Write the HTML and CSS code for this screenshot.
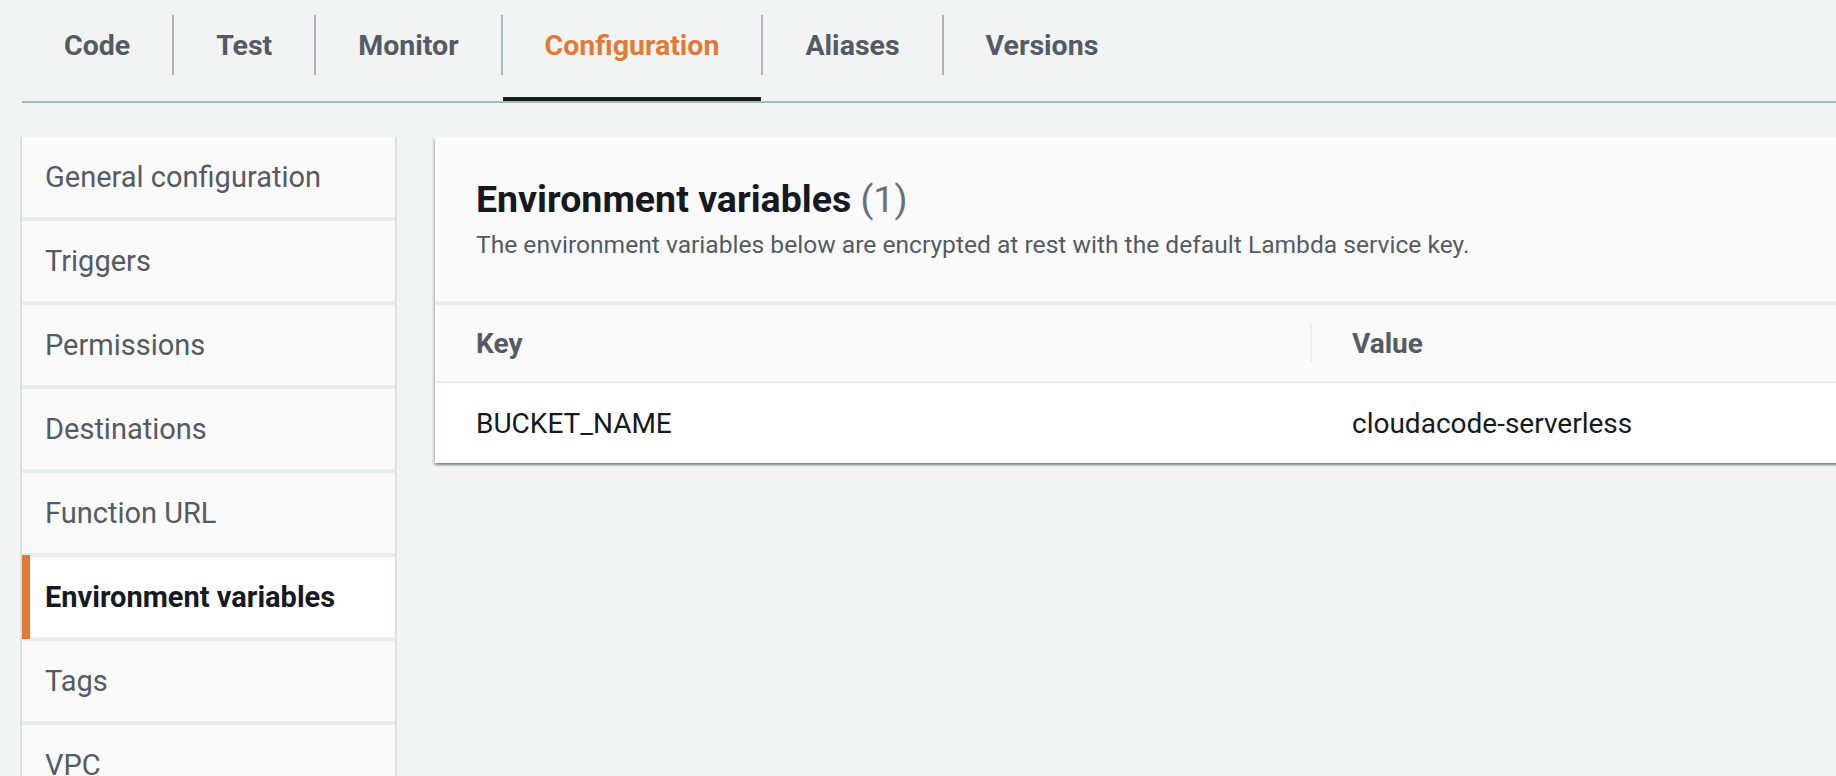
FILE: index.html
```html
<!DOCTYPE html>
<html lang="en">
<head>
<meta charset="utf-8">
<title>Lambda configuration</title>
<link rel="stylesheet" href="styles.css">
</head>
<body>
<div class="page">
  <nav class="tabs">
    <div class="tab">Code</div>
    <div class="tab-sep"></div>
    <div class="tab">Test</div>
    <div class="tab-sep"></div>
    <div class="tab">Monitor</div>
    <div class="tab-sep"></div>
    <div class="tab tab-active">Configuration</div>
    <div class="tab-sep"></div>
    <div class="tab">Aliases</div>
    <div class="tab-sep"></div>
    <div class="tab">Versions</div>
  </nav>

  <div class="layout">
    <ul class="side-nav">
      <li class="side-item">General configuration</li>
      <li class="side-item">Triggers</li>
      <li class="side-item">Permissions</li>
      <li class="side-item">Destinations</li>
      <li class="side-item">Function URL</li>
      <li class="side-item side-active">Environment variables</li>
      <li class="side-item">Tags</li>
      <li class="side-item">VPC</li>
    </ul>

    <section class="panel">
      <header class="panel-header">
        <h2 class="panel-title">Environment variables <span class="count">(1)</span></h2>
        <p class="panel-desc">The environment variables below are encrypted at rest with the default Lambda service key.</p>
      </header>
      <div class="table">
        <div class="th th-key">Key</div>
        <div class="th th-value"><span class="col-sep"></span>Value</div>
        <div class="td td-key">BUCKET_NAME</div>
        <div class="td td-value">cloudacode-serverless</div>
      </div>
    </section>
  </div>
</div>
</body>
</html>
```

FILE: styles.css
```css
html, body {
  margin: 0;
  padding: 0;
  background: #f2f3f3;
  overflow: hidden;
}

body {
  font-family: Roboto, "Liberation Sans", Arial, sans-serif;
  color: #16191f;
}

.page {
  padding-left: 22px;
  width: 1900px;
}

/* ---------- Tabs ---------- */
.tabs {
  display: flex;
  align-items: flex-start;
  border-bottom: 2px solid #aab7b8;
}

.tab {
  display: flex;
  align-items: center;
  height: 60px;
  padding: 15px 42px 22px;
  border-bottom: 4px solid transparent;
  font-size: 28.5px;
  font-weight: 700;
  color: #545b64;
  white-space: nowrap;
}

.tab-active {
  color: #e27a37;
  border-bottom-color: #16191f;
}

.tab-sep {
  width: 2px;
  height: 60px;
  margin-top: 15px;
  background: #aab7b8;
  flex: none;
}

/* ---------- Layout ---------- */
.layout {
  display: flex;
  align-items: flex-start;
  gap: 40px;
  margin-top: 34px;
}

/* ---------- Side nav ---------- */
.side-nav {
  list-style: none;
  margin: 0;
  padding: 0;
  width: 373px;
  flex: none;
  display: flex;
  flex-direction: column;
  gap: 4px;
  background: #eaeded;
  box-shadow: 1px 0 0 #d5dbdb, -1px 0 0 #d5dbdb, 2px 0 0 #e4e7e7, -2px 0 0 #e4e7e7;
}

.side-item {
  position: relative;
  height: 80px;
  display: flex;
  align-items: center;
  padding-left: 23px;
  background: #fafafa;
  font-size: 29px;
  color: #545b64;
  white-space: nowrap;
}

.side-active {
  background: #ffffff;
  color: #16191f;
  font-weight: 700;
}

.side-active::before {
  content: "";
  position: absolute;
  left: 0;
  top: -2px;
  bottom: -2px;
  width: 8px;
  background: #e27a37;
}

/* ---------- Panel ---------- */
.panel {
  flex: none;
  width: 1500px;
  background: #eaeded;
  box-shadow: 0 2px 2px 0 rgba(0, 28, 36, 0.3), 2px 2px 2px 0 rgba(0, 28, 36, 0.15), -2px 2px 2px 0 rgba(0, 28, 36, 0.15);
}

.panel-header {
  background: #fafafa;
  height: 164px;
  box-sizing: border-box;
  padding: 40px 41px 0;
  margin-bottom: 4px;
}

.panel-title {
  margin: 0;
  font-size: 37.5px;
  line-height: 44px;
  font-weight: 700;
  color: #16191f;
}

.count {
  font-weight: 400;
  color: #687078;
}

.panel-desc {
  margin: 8px 0 0;
  font-size: 24.6px;
  line-height: 32px;
  color: #545b64;
}

.table {
  display: grid;
  grid-template-columns: 875px 1fr;
  row-gap: 2px;
}

.th, .td {
  display: flex;
  align-items: center;
  padding-left: 41px;
  font-size: 28px;
}

.th {
  position: relative;
  height: 76px;
  background: #fafafa;
  font-weight: 700;
  color: #545b64;
}

.th-value {
  padding-left: 42px;
}

.col-sep {
  position: absolute;
  left: 0;
  top: 19px;
  width: 2px;
  height: 38px;
  background: #eaeded;
}

.td {
  height: 80px;
  background: #ffffff;
  color: #16191f;
}

.td-value {
  padding-left: 42px;
}
```
